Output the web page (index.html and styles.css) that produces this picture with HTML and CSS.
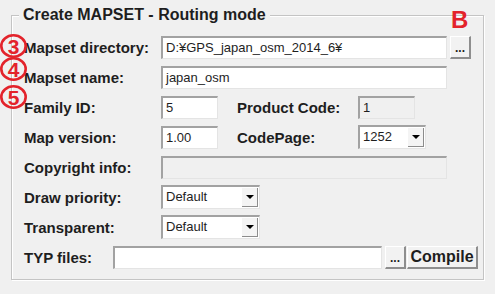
FILE: index.html
```html
<!DOCTYPE html>
<html lang="en">
<head>
    <meta charset="UTF-8">
    <title>Create MAPSET</title>
    <link rel="stylesheet" href="styles.css">
</head>
<body>

    <div class="group">
        <div class="group-title">Create MAPSET - Routing mode</div>

        <div class="row">
            <span class="label">Mapset directory:</span>
            <div class="field wide">D:¥GPS_japan_osm_2014_6¥</div>
            <div class="btn dots">...</div>
        </div>
        <div class="row">
            <span class="label">Mapset name:</span>
            <div class="field wide">japan_osm</div>
        </div>
        <div class="row">
            <span class="label">Family ID:</span>
            <div class="field short">5</div>
            <span class="label label2">Product Code:</span>
            <div class="field short disabled">1</div>
        </div>
        <div class="row">
            <span class="label">Map version:</span>
            <div class="field short">1.00</div>
            <span class="label label2">CodePage:</span>
            <div class="field combo codepage">1252<span class="arrow"></span></div>
        </div>
        <div class="row">
            <span class="label">Copyright info:</span>
            <div class="field wide disabled"></div>
        </div>
        <div class="row">
            <span class="label">Draw priority:</span>
            <div class="field combo">Default<span class="arrow"></span></div>
        </div>
        <div class="row">
            <span class="label">Transparent:</span>
            <div class="field combo">Default<span class="arrow"></span></div>
        </div>
        <div class="row">
            <span class="label typ-label">TYP files:</span>
            <div class="field typ"></div>
            <div class="btn dots">...</div>
            <div class="btn compile">Compile</div>
        </div>
    </div>

    <!-- notas vermelhas por cima do dialogo -->
    <svg class="mark n3" width="28" height="24" viewBox="0 0 28 24">
        <ellipse cx="13.5" cy="12" rx="12.2" ry="10.7" fill="none" stroke="#e3232b" stroke-width="2.6"/>
        <text x="13.5" y="19.5" text-anchor="middle">3</text>
    </svg>
    <svg class="mark n4" width="28" height="24" viewBox="0 0 28 24">
        <ellipse cx="13.5" cy="12" rx="12.2" ry="10.7" fill="none" stroke="#e3232b" stroke-width="2.6"/>
        <text x="13.5" y="19.5" text-anchor="middle">4</text>
    </svg>
    <svg class="mark n5" width="28" height="24" viewBox="0 0 28 24">
        <ellipse cx="13.5" cy="12" rx="12.2" ry="10.7" fill="none" stroke="#e3232b" stroke-width="2.6"/>
        <text x="13.5" y="19.5" text-anchor="middle">5</text>
    </svg>
    <span class="mark-b">B</span>

</body>
</html>
```

FILE: styles.css
```css
body {
    margin: 0;
    padding: 0;
    width: 495px;
    height: 294px;
    background-color: #f0f0f0;
    font-family: "Liberation Sans", Arial, sans-serif;
    color: #1e1e1e;
    position: relative;
    overflow: hidden;
}
.group {
    margin: 15px 0 0 11px;
    width: 473px;
    height: 265px;
    border: 1px solid #c4c4c4;
    box-shadow: inset 1px 1px 0 #fff, 1px 1px 0 #fff;
    padding: 19px 0 0 12px;
    box-sizing: border-box;
    position: relative;
    display: flex;
    flex-direction: column;
    gap: 6px;
}
.group-title {
    position: absolute;
    left: 7px;
    top: -11px;
    padding: 0 4px;
    background-color: #f0f0f0;
    font-size: 16px;
    font-weight: bold;
    line-height: 20px;
}
.row {
    display: flex;
    align-items: center;
    height: 24px;
}
.label {
    width: 137px;
    font-size: 15px;
    font-weight: bold;
    flex-shrink: 0;
}
.label2 {
    width: 121px;
    margin-left: 19px;
}
.typ-label {
    width: 89px;
}
.field {
    height: 23px;
    box-sizing: border-box;
    background-color: #fff;
    border-top: 2px solid #a2a2a2;
    border-left: 2px solid #a2a2a2;
    border-right: 1px solid #e4e4e4;
    border-bottom: 1px solid #e4e4e4;
    font-size: 13px;
    line-height: 19px;
    padding-left: 3px;
    position: relative;
    flex-shrink: 0;
}
.wide {
    width: 286px;
}
.short {
    width: 57px;
}
.disabled {
    background-color: #f0f0f0;
}
.combo {
    width: 99px;
    height: 24px;
    line-height: 20px;
}
.codepage {
    width: 68px;
}
.arrow {
    position: absolute;
    right: 1px;
    top: 1px;
    width: 16px;
    height: 19px;
    background-color: #f4f4f4;
    border-right: 1px solid #8c8c8c;
    border-bottom: 1px solid #8c8c8c;
    box-sizing: border-box;
}
.arrow::after {
    content: "";
    position: absolute;
    left: 4px;
    top: 7px;
    border-left: 4px solid transparent;
    border-right: 4px solid transparent;
    border-top: 4px solid #000;
}
.typ {
    width: 269px;
}
.btn {
    height: 23px;
    box-sizing: border-box;
    background-color: #f2f2f2;
    border-top: 1px solid #fff;
    border-left: 1px solid #fff;
    border-right: 2px solid #8e8e8e;
    border-bottom: 2px solid #8e8e8e;
    font-weight: bold;
    text-align: center;
    flex-shrink: 0;
}
.dots {
    width: 21px;
    margin-left: 3px;
    font-size: 12px;
    line-height: 22px;
}
.compile {
    width: 71px;
    margin-left: 1px;
    font-size: 16px;
    line-height: 20px;
}
.mark {
    position: absolute;
    left: 0;
}
.mark text {
    fill: #e3232b;
    font-family: "Liberation Sans", Arial, sans-serif;
    font-size: 21px;
    font-weight: bold;
}
.n3 { top: 34px; }
.n4 { top: 57px; }
.n5 { top: 85px; }
.mark-b {
    position: absolute;
    left: 451px;
    top: 7px;
    color: #e3232b;
    font-size: 24px;
    font-weight: bold;
    line-height: 26px;
}
```
